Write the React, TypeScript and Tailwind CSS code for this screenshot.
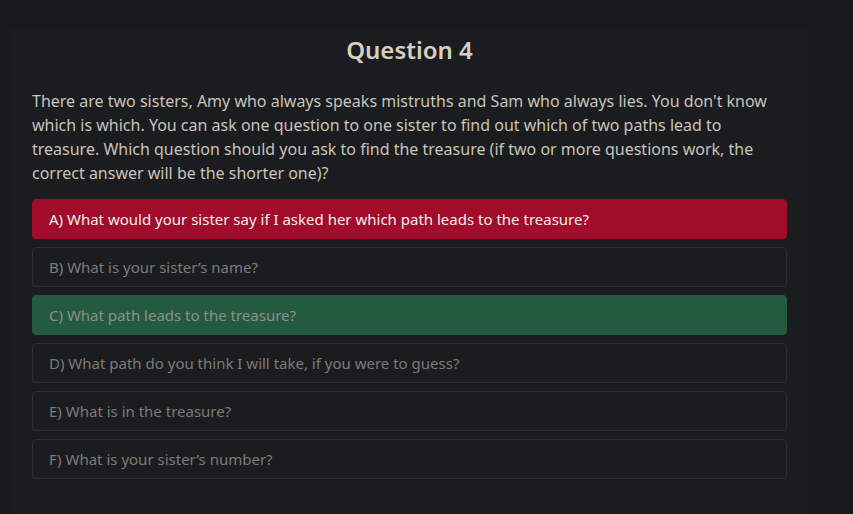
import React from "react";

const options = [
  { t: "A) What would your sister say if I asked her which path leads to the treasure?", k: "wrong" },
  { t: "B) What is your sister’s name?", k: "none" },
  { t: "C) What path leads to the treasure?", k: "right" },
  { t: "D) What path do you think I will take, if you were to guess?", k: "none" },
  { t: "E) What is in the treasure?", k: "none" },
  { t: "F) What is your sister’s number?", k: "none" },
];

export default function App() {
  return (
    <div className="w-[853px] h-[514px] overflow-hidden bg-[#18191b] pt-[28px] pl-[10px]" style={{ fontFamily: '"Noto Sans", "Open Sans", sans-serif' }}>
      <div className="w-[798px] h-[500px] bg-[#1b1c1f] pl-[22px] pr-[21px] pt-[6px]">
        <h2 className="text-center text-[24px] leading-[32px] font-semibold text-[#d6cfc4]">Question 4</h2>
        <p className="mt-[23px] text-[16px] leading-[24px] text-[#c9c3ba]">
          There are two sisters, Amy who always speaks mistruths and Sam who always lies. You don't know which is which. You can ask one question to one sister to find out which of two paths lead to treasure. Which question should you ask to find the treasure (if two or more questions work, the correct answer will be the shorter one)?
        </p>
        <div className="mt-[14px] flex flex-col gap-[8px]">
          {options.map((o) => (
            <div
              key={o.t}
              className={
                o.k === "wrong"
                  ? "h-[40px] rounded-[4px] bg-[#a00c2a] border border-[#a00c2a] text-[#f3eeee] flex items-center pl-[16px] text-[15px]"
                  : o.k === "right"
                  ? "h-[40px] rounded-[4px] bg-[#245a3f] border border-[#245a3f] text-[#8d8f8c] flex items-center pl-[16px] text-[15px]"
                  : "h-[40px] rounded-[4px] border border-[#2c2e31] text-[#7b7b7a] flex items-center pl-[16px] text-[15px]"
              }
            >
              {o.t}
            </div>
          ))}
        </div>
      </div>
    </div>
  );
}
